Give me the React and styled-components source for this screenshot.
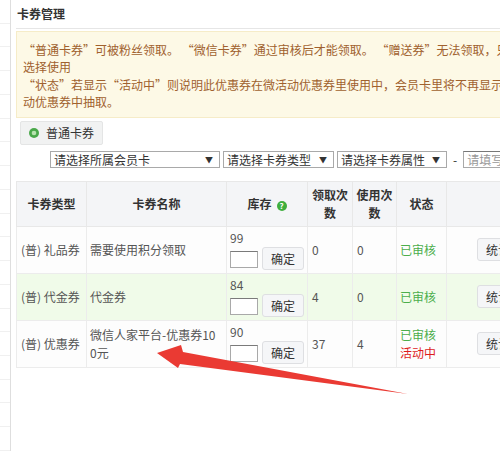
import React from 'react';
import styled, { createGlobalStyle } from 'styled-components';

const GlobalStyle = createGlobalStyle`
    html, body {
        margin: 0;
        padding: 0;
        background: #fff;
        overflow: hidden;
    }
    body {
        font-family: "Noto Sans CJK SC", "Liberation Sans", sans-serif;
        font-size: 12px;
        color: #555;
    }
`;

const Frame = styled.div`
    position: relative;
    display: flex;
    width: 500px;
    height: 451px;
    overflow: hidden;
`;

const Sidebar = styled.div`
    flex: 0 0 10px;
    border-right: 1px solid #dedede;
    display: flex;
    flex-direction: column;
`;

const SideItem = styled.div`
    height: 24px;
    border-bottom: 1px solid #f0f0f0;
`;

const Main = styled.div`
    flex: 0 0 700px;
    margin-left: 5px;
    display: flex;
    flex-direction: column;
`;

const Title = styled.div`
    height: 28px;
    line-height: 27px;
    padding-left: 1px;
    font-size: 12px;
    font-weight: 700;
    color: #333;
    border-bottom: 1px solid #e6e6e6;
`;

const Notice = styled.div`
    margin-top: 2px;
    width: 640px;
    padding: 9px 6px 6px;
    background: #fdf9e6;
    border: 1px solid #f6ecc8;
    color: #a0612e;
    line-height: 17.4px;
    white-space: nowrap;
`;

const Toolbar = styled.div`
    display: flex;
    margin: 3px 0 0 4px;
`;

const ToolButton = styled.div`
    display: flex;
    align-items: center;
    gap: 7px;
    height: 22px;
    padding: 0 8px 0 8px;
    background: #f1f2f2;
    border: 1px solid #e4e5e5;
    border-radius: 2px;
    color: #333;
    font-size: 12px;
`;

const Filters = styled.div`
    display: flex;
    align-items: center;
    gap: 3px;
    margin: 6px 0 0 34px;
`;

const SelectBox = styled.div`
    box-sizing: border-box;
    display: flex;
    align-items: center;
    justify-content: space-between;
    width: ${p => p.w}px;
    height: 17px;
    padding: 0 6px 0 3px;
    border: 1px solid #a9a9a9;
    background: #fff;
    color: #333;
    font-size: 12px;
    line-height: 15px;
`;

const Caret = styled.span`
    font-size: 8px;
    color: #333;
`;

const Dash = styled.span`
    margin: 0 3px;
    color: #333;
`;

const TextInput = styled.div`
    box-sizing: border-box;
    width: 120px;
    height: 17px;
    padding: 0 3px;
    border: 1px solid #a9a9a9;
    border-top-color: #777;
    color: #999;
    line-height: 15px;
`;

const Table = styled.table`
    margin-top: 13px;
    border-collapse: collapse;
    table-layout: fixed;
    width: 630px;
`;

const Th = styled.th`
    height: 44px;
    padding: 0 3px;
    background: #f4f5f7;
    border: 1px solid #e8e8e8;
    color: #333;
    font-size: 12px;
    font-weight: 700;
    line-height: 18px;
    text-align: center;
`;

const Tr = styled.tr`
    background: ${p => (p.hl ? '#f0fbe9' : '#fdfdfd')};
`;

const Td = styled.td`
    height: 46px;
    padding: 0 ${p => p.pr || 3}px 0 ${p => p.pl || 3}px;
    border: 1px solid #ececec;
    vertical-align: middle;
    line-height: 18px;
    word-break: break-all;
    color: #555;
`;

const StockBox = styled.div`
    display: flex;
    flex-direction: column;
`;

const StockRow = styled.div`
    display: flex;
    align-items: flex-end;
    gap: 4px;
`;

const SmallInput = styled.div`
    box-sizing: border-box;
    width: 30px;
    height: 17px;
    margin-bottom: 2px;
    background: #fff;
    border: 1px solid #a9a9a9;
    border-top-color: #7a7a7a;
`;

const Btn = styled.div`
    display: inline-flex;
    align-items: center;
    justify-content: center;
    box-sizing: border-box;
    height: 23px;
    padding: 0 8px;
    background: #f5f6f8;
    border: 1px solid #dedfe2;
    border-radius: 3px;
    color: #333;
    white-space: nowrap;
`;

const Actions = styled.div`
    display: flex;
    gap: 4px;
`;

const Status = styled.div`
    color: ${p => (p.red ? '#dd1c1c' : '#4cae4c')};
`;

const Help = styled.span`
    display: inline-flex;
    align-items: center;
    justify-content: center;
    width: 10px;
    height: 10px;
    margin-left: 5px;
    border-radius: 50%;
    background: #3eaf3e;
    color: #fff;
    font-size: 8px;
    line-height: 10px;
`;

const Arrow = styled.svg`
    position: absolute;
    left: 0;
    top: 0;
    pointer-events: none;
`;

const rows = [
    { type: '(普) 礼品券', name: '需要使用积分领取', stock: 99, got: 0, used: 0, active: false },
    { type: '(普) 代金券', name: '代金券', stock: 84, got: 4, used: 0, active: false, hl: true },
    { type: '(普) 优惠券', name: '微信人家平台-优惠券100元', stock: 90, got: 37, used: 4, active: true },
];

function CircleIcon() {
    return (
        <svg width="10" height="10" viewBox="0 0 10 10">
            <circle cx="5" cy="5" r="5" fill="#4aa84a" />
            <circle cx="5" cy="5" r="2.3" fill="#b8e3b0" />
        </svg>
    );
}

export default function App() {
    return (
        <>
            <GlobalStyle />
            <Frame>
                <Sidebar>
                    {Array.from({ length: 19 }).map((_, i) => (
                        <SideItem key={i} />
                    ))}
                </Sidebar>
                <Main>
                    <Title>卡券管理</Title>
                    <Notice>
                        “普通卡券”可被粉丝领取。 “微信卡券”通过审核后才能领取。 “赠送券”无法领取，只能在会员卡中
                        <br />
                        选择使用
                        <br />
                        “状态”若显示“活动中”则说明此优惠券在微活动优惠券里使用中，会员卡里将不再显示，只能在微活
                        <br />
                        动优惠券中抽取。
                    </Notice>
                    <Toolbar>
                        <ToolButton>
                            <CircleIcon />
                            普通卡券
                        </ToolButton>
                    </Toolbar>
                    <Filters>
                        <SelectBox w={170}>
                            请选择所属会员卡<Caret>▼</Caret>
                        </SelectBox>
                        <SelectBox w={111}>
                            请选择卡券类型<Caret>▼</Caret>
                        </SelectBox>
                        <SelectBox w={110}>
                            请选择卡券属性<Caret>▼</Caret>
                        </SelectBox>
                        <Dash>-</Dash>
                        <TextInput>请填写卡券名称</TextInput>
                    </Filters>
                    <Table>
                        <colgroup>
                            <col style={{ width: 70 }} />
                            <col style={{ width: 140 }} />
                            <col style={{ width: 81 }} />
                            <col style={{ width: 45 }} />
                            <col style={{ width: 44 }} />
                            <col style={{ width: 50 }} />
                            <col style={{ width: 200 }} />
                        </colgroup>
                        <thead>
                            <tr>
                                <Th>卡券类型</Th>
                                <Th>卡券名称</Th>
                                <Th>
                                    库存<Help>?</Help>
                                </Th>
                                <Th>领取次数</Th>
                                <Th>使用次数</Th>
                                <Th>状态</Th>
                                <Th />
                            </tr>
                        </thead>
                        <tbody>
                            {rows.map(r => (
                                <Tr key={r.type} hl={r.hl}>
                                    <Td pl={4}>{r.type}</Td>
                                    <Td pr={10}>{r.name}</Td>
                                    <Td>
                                        <StockBox>
                                            <div>{r.stock}</div>
                                            <StockRow>
                                                <SmallInput />
                                                <Btn>确定</Btn>
                                            </StockRow>
                                        </StockBox>
                                    </Td>
                                    <Td pl={4}>{r.got}</Td>
                                    <Td pl={4}>{r.used}</Td>
                                    <Td>
                                        <Status>已审核</Status>
                                        {r.active && <Status red>活动中</Status>}
                                    </Td>
                                    <Td pl={30}>
                                        <Actions>
                                            <Btn>统计</Btn>
                                            <Btn>编辑</Btn>
                                        </Actions>
                                    </Td>
                                </Tr>
                            ))}
                        </tbody>
                    </Table>
                </Main>
                <Arrow width="500" height="451" viewBox="0 0 500 451">
                    <polygon
                        points="157,353 181,345 183,352 408,394 180,364 178,368"
                        fill="#ea3a33"
                    />
                </Arrow>
            </Frame>
        </>
    );
}
